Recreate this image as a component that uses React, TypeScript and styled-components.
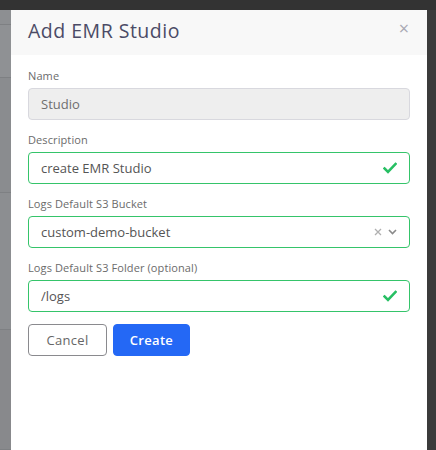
import React from "react";
import styled, { createGlobalStyle } from "styled-components";

const Global = createGlobalStyle`
  html, body { margin: 0; padding: 0; }
  body { font-family: "Open Sans", "Noto Sans", sans-serif; background: #3a3a3a; }
  * { box-sizing: border-box; }
`;

const Screen = styled.div`
  width: 436px;
  height: 450px;
  display: grid;
  grid-template-columns: 11px 416px 9px;
  grid-template-rows: 10px 440px;
  background: #3b3b3b;
  overflow: hidden;
`;

const TopBar = styled.div`
  grid-column: 1 / 4;
  background: #333333;
`;

const Backdrop = styled.div`
  display: flex;
  flex-direction: column;
  background: #8a8c8f;
`;

const Band = styled.div<{ $h: number; $c: string }>`
  height: ${(p) => p.$h}px;
  background: ${(p) => p.$c};
  border-bottom: 1px solid #7e8083;
`;

const Modal = styled.div`
  background: #ffffff;
  display: flex;
  flex-direction: column;
`;

const Header = styled.div`
  height: 45px;
  background: #f8f8f8;
  display: flex;
  align-items: center;
  justify-content: space-between;
  padding: 0 18px 4px 17px;
`;

const Title = styled.h2`
  margin: 0;
  font-size: 19.5px;
  font-weight: 400;
  color: #4b4b66;
  letter-spacing: 0.5px;
`;

const Close = styled.span`
  color: #a9a9b3;
  font-size: 18px;
  line-height: 1;
  margin-top: -6px;
`;

const Body = styled.div`
  padding: 13px 17px 0 17px;
  display: flex;
  flex-direction: column;
  gap: 12px;
`;

const Field = styled.div`
  display: flex;
  flex-direction: column;
`;

const Label = styled.label`
  font-size: 11px;
  color: #6b6b6b;
  height: 20px;
  line-height: 13px;
  padding-top: 1px;
  letter-spacing: 0.1px;
`;

const Box = styled.div<{ $state: "disabled" | "valid" }>`
  height: 32px;
  border-radius: 4px;
  border: 1px solid ${(p) => (p.$state === "valid" ? "#35c46a" : "#d8d8de")};
  background: ${(p) => (p.$state === "valid" ? "#ffffff" : "#eeeeee")};
  display: flex;
  align-items: center;
  padding: 0 10px 0 12px;
  font-size: 13px;
  color: ${(p) => (p.$state === "valid" ? "#555555" : "#6f6f6f")};
  letter-spacing: 0;
`;

const Value = styled.span`
  flex: 1;
`;

const Icons = styled.span`
  display: flex;
  align-items: center;
  gap: 6px;
  margin-right: 2px;
`;

const Actions = styled.div`
  display: flex;
  gap: 6px;
`;

const Button = styled.button<{ $primary?: boolean }>`
  height: 32px;
  width: ${(p) => (p.$primary ? "77px" : "79px")};
  border-radius: 4px;
  font-family: inherit;
  font-size: 13px;
  letter-spacing: 0.3px;
  border: 1px solid ${(p) => (p.$primary ? "#2468f5" : "#8a8a8e")};
  background: ${(p) => (p.$primary ? "#2468f5" : "#ffffff")};
  color: ${(p) => (p.$primary ? "#ffffff" : "#666666")};
  font-weight: ${(p) => (p.$primary ? 600 : 400)};
`;

const Check = () => (
  <svg width="14" height="12" viewBox="0 0 14 12">
    <path d="M1.5 6.5 L5 10 L12.5 2" fill="none" stroke="#27bf63" strokeWidth="2.6" strokeLinecap="square" />
  </svg>
);

const Clear = () => (
  <svg width="8" height="8" viewBox="0 0 8 8">
    <path d="M1 1 L7 7 M7 1 L1 7" stroke="#b0b0b0" strokeWidth="1.3" />
  </svg>
);

const Chevron = () => (
  <svg width="9" height="6" viewBox="0 0 9 6">
    <path d="M1 1 L4.5 4.5 L8 1" fill="none" stroke="#8a8a8a" strokeWidth="1.6" />
  </svg>
);

export default function App() {
  return (
    <>
      <Global />
      <Screen>
        <TopBar />
        <Backdrop>
          <Band $h={15} $c="#8d8f92" />
          <Band $h={53} $c="#8f9194" />
          <Band $h={115} $c="#8a8c8f" />
          <Band $h={137} $c="#8c8e91" />
          <Band $h={120} $c="#88898c" />
        </Backdrop>
        <Modal>
          <Header>
            <Title>Add EMR Studio</Title>
            <Close>×</Close>
          </Header>
          <Body>
            <Field>
              <Label>Name</Label>
              <Box $state="disabled">
                <Value>Studio</Value>
              </Box>
            </Field>
            <Field>
              <Label>Description</Label>
              <Box $state="valid">
                <Value>create EMR Studio</Value>
                <Icons><Check /></Icons>
              </Box>
            </Field>
            <Field>
              <Label>Logs Default S3 Bucket</Label>
              <Box $state="valid">
                <Value>custom-demo-bucket</Value>
                <Icons><Clear /><Chevron /></Icons>
              </Box>
            </Field>
            <Field>
              <Label>Logs Default S3 Folder (optional)</Label>
              <Box $state="valid">
                <Value>/logs</Value>
                <Icons><Check /></Icons>
              </Box>
            </Field>
            <Actions>
              <Button>Cancel</Button>
              <Button $primary>Create</Button>
            </Actions>
          </Body>
        </Modal>
        <div />
      </Screen>
    </>
  );
}
